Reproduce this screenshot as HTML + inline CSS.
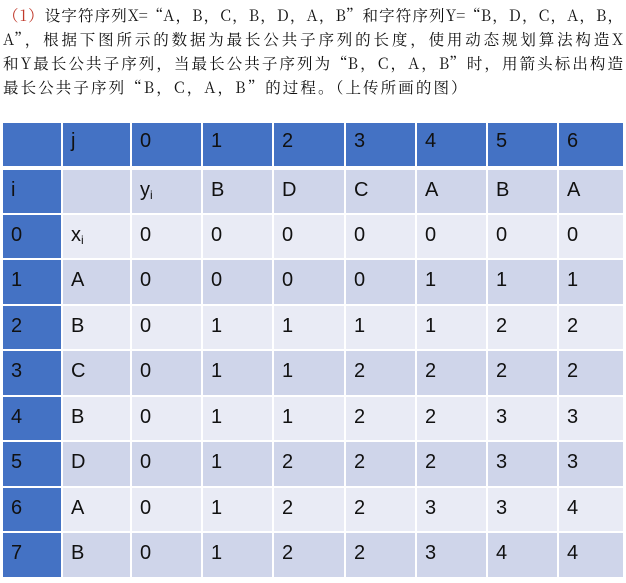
<!DOCTYPE html>
<html><head><meta charset="utf-8"><style>
html,body{margin:0;padding:0;background:#fff;width:626px;height:583px;overflow:hidden}
.p{position:absolute;left:3px;top:3px;width:620px;font-family:"Noto Serif CJK SC","Liberation Serif",serif;font-size:15.5px;line-height:24px;color:#111}
.p div{white-space:nowrap;height:24px;overflow:visible}
.p div.j{text-align:justify;text-align-last:justify;text-justify:inter-character}
.p div.l4{letter-spacing:2.1px}
.r{color:#c0392b}
table{position:absolute;left:3px;top:123px;border-collapse:collapse;table-layout:fixed;font-family:"Liberation Sans",sans-serif;font-size:20px;color:#111}
td{padding:0 0 0 8px;vertical-align:top;border:2px solid #fff;height:45.5px;box-sizing:border-box;line-height:30px;padding-top:5px}
tr.h td{background:#4472c4;border-bottom:4px solid #fff;height:45px;padding-top:3px}
tr.d td{background:#cfd5ea}
tr.l td{background:#e9ebf5}
tr td:first-child{background:#4472c4;border-left:none}
tr:first-child td{border-top:none}
sub{font-size:12px;vertical-align:-3px}
</style></head><body>
<div class="p">
<div class="j"><span class="r">（1）</span>设字符序列X=“A，B，C，B，D，A，B”和字符序列Y=“B，D，C，A，B，</div>
<div class="j">A”，根据下图所示的数据为最长公共子序列的长度，使用动态规划算法构造X</div>
<div class="j">和Y最长公共子序列，当最长公共子序列为“B，C，A，B”时，用箭头标出构造</div>
<div class="l4">最长公共子序列“B，C，A，B”的过程。（上传所画的图）</div>
</div>
<table>
<colgroup><col style="width:59px"><col style="width:69px"><col style="width:71px"><col style="width:71px"><col style="width:72px"><col style="width:71px"><col style="width:71px"><col style="width:71px"><col style="width:66px"></colgroup>
<tr class="h"><td></td><td>j</td><td>0</td><td>1</td><td>2</td><td>3</td><td>4</td><td>5</td><td>6</td></tr>
<tr class="d"><td>i</td><td></td><td>y<sub>i</sub></td><td>B</td><td>D</td><td>C</td><td>A</td><td>B</td><td>A</td></tr>
<tr class="l"><td>0</td><td>x<sub>i</sub></td><td>0</td><td>0</td><td>0</td><td>0</td><td>0</td><td>0</td><td>0</td></tr>
<tr class="d"><td>1</td><td>A</td><td>0</td><td>0</td><td>0</td><td>0</td><td>1</td><td>1</td><td>1</td></tr>
<tr class="l"><td>2</td><td>B</td><td>0</td><td>1</td><td>1</td><td>1</td><td>1</td><td>2</td><td>2</td></tr>
<tr class="d"><td>3</td><td>C</td><td>0</td><td>1</td><td>1</td><td>2</td><td>2</td><td>2</td><td>2</td></tr>
<tr class="l"><td>4</td><td>B</td><td>0</td><td>1</td><td>1</td><td>2</td><td>2</td><td>3</td><td>3</td></tr>
<tr class="d"><td>5</td><td>D</td><td>0</td><td>1</td><td>2</td><td>2</td><td>2</td><td>3</td><td>3</td></tr>
<tr class="l"><td>6</td><td>A</td><td>0</td><td>1</td><td>2</td><td>2</td><td>3</td><td>3</td><td>4</td></tr>
<tr class="d"><td>7</td><td>B</td><td>0</td><td>1</td><td>2</td><td>2</td><td>3</td><td>4</td><td>4</td></tr>
</table>
</body></html>
